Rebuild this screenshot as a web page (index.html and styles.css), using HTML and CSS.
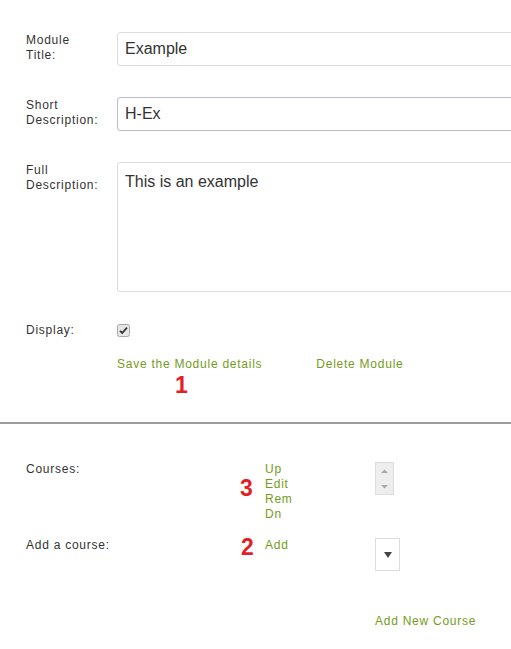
FILE: index.html
```html
<!DOCTYPE html>
<html>
<head>
<meta charset="utf-8">
<link rel="stylesheet" href="styles.css">
</head>
<body>
<div class="page">
  <section class="module">
    <div class="row">
      <label class="lbl">Module<br>Title:</label>
      <input class="field" type="text" value="Example">
    </div>
    <div class="row">
      <label class="lbl">Short<br>Description:</label>
      <input class="field focused" type="text" value="H-Ex">
    </div>
    <div class="row">
      <label class="lbl">Full<br>Description:</label>
      <textarea class="field area">This is an example</textarea>
    </div>
    <div class="row row-check">
      <label class="lbl">Display:</label>
      <span class="check"><svg width="13" height="13" viewBox="0 0 13 13"><rect x="0.5" y="0.5" width="12" height="12" rx="2" fill="#e6e6e6" stroke="#a9a9a9"/><path d="M3 6.8 L5.2 9 L10 3.6" fill="none" stroke="#333" stroke-width="1.8"/></svg></span>
    </div>
    <div class="actions">
      <a class="link save">Save the Module details<span class="note note1">1</span></a>
      <a class="link">Delete Module</a>
    </div>
  </section>
  <hr class="divider">
  <section class="courses">
    <div class="crow">
      <span class="clbl">Courses:</span>
      <div class="links">
        <span class="note note3">3</span>
        <a class="link">Up</a>
        <a class="link">Edit</a>
        <a class="link">Rem</a>
        <a class="link">Dn</a>
      </div>
      <div class="listbox">
        <svg width="19" height="33" viewBox="0 0 19 33"><path d="M6 11 L9.5 7.5 L13 11 Z" fill="#a8a8a8"/><path d="M6 23 L9.5 26.5 L13 23 Z" fill="#a8a8a8"/></svg>
      </div>
    </div>
    <div class="crow add-row">
      <span class="clbl">Add a course:</span>
      <div class="links">
        <span class="note note2">2</span>
        <a class="link">Add</a>
      </div>
      <div class="select">
        <svg width="8" height="7" viewBox="0 0 8 7"><path d="M0 0 H8 L4 6 Z" fill="#444"/></svg>
      </div>
    </div>
    <div class="crow new-row">
      <span class="clbl"></span>
      <span class="links"></span>
      <a class="link">Add New Course</a>
    </div>
  </section>
</div>
</body>
</html>
```

FILE: styles.css
```css
html, body {
  margin: 0;
  padding: 0;
  background: #fff;
  overflow: hidden;
}
body {
  font-family: "Liberation Sans", Arial, sans-serif;
  color: #333;
}
.page {
  width: 511px;
  overflow: hidden;
}
.module {
  padding: 32px 0 0 26px;
  display: flex;
  flex-direction: column;
  gap: 31px;
}
.row {
  display: grid;
  grid-template-columns: 91px 420px;
  align-items: start;
}
.lbl {
  font-size: 12px;
  line-height: 15px;
  letter-spacing: 0.75px;
  color: #333;
  padding-top: 1px;
}
.field {
  box-sizing: border-box;
  height: 34px;
  width: 420px;
  border: 1px solid #dcdcdc;
  border-radius: 3px;
  padding: 0 7px;
  font-family: "Liberation Sans", Arial, sans-serif;
  font-size: 16px;
  color: #333;
  background: #fff;
  outline: none;
  margin: 0;
}
.field.focused {
  border-color: #bdb8d6;
}
.area {
  height: 130px;
  padding-top: 9px;
  line-height: 19px;
  resize: none;
  display: block;
}
.row-check {
  align-items: center;
}
.row-check .lbl {
  padding-top: 0;
}
.check {
  display: block;
  height: 13px;
}
.check svg { display: block; }
.actions {
  margin-top: -12px;
  padding-left: 91px;
  display: flex;
  gap: 54px;
}
.link {
  font-size: 12px;
  line-height: 15px;
  letter-spacing: 0.75px;
  color: #739c22;
  text-decoration: none;
  cursor: pointer;
  display: block;
}
.save { position: relative; }
.note {
  position: absolute;
  font-family: "Liberation Sans", Arial, sans-serif;
  font-weight: bold;
  font-size: 23px;
  line-height: 23px;
  color: #e21f26;
  letter-spacing: 0;
}
.note1 { left: 58px; top: 17px; }
.divider {
  margin: 50px 0 0;
  border: 0;
  height: 2px;
  background: #9c9c9c;
}
.courses {
  padding: 38px 0 0 26px;
  display: flex;
  flex-direction: column;
}
.crow {
  display: grid;
  grid-template-columns: 239px 110px auto;
  align-items: start;
}
.clbl {
  font-size: 12px;
  line-height: 15px;
  letter-spacing: 0.75px;
  color: #333;
}
.links {
  position: relative;
  display: flex;
  flex-direction: column;
}
.note3 { left: -25px; top: 15px; }
.note2 { left: -24px; top: -2px; }
.listbox {
  box-sizing: border-box;
  width: 19px;
  height: 33px;
  background: #eeeeee;
  border: 1px solid #dddddd;
  overflow: hidden;
}
.listbox svg { display: block; margin: -1px 0 0 -1px; }
.add-row { margin-top: 16px; }
.select {
  box-sizing: border-box;
  width: 25px;
  height: 33px;
  border: 1px solid #dddddd;
  background: #fff;
  display: flex;
  align-items: center;
  justify-content: center;
}
.select svg { display: block; margin: 1px 0 0 0; }
.new-row { margin-top: 43px; }
```
